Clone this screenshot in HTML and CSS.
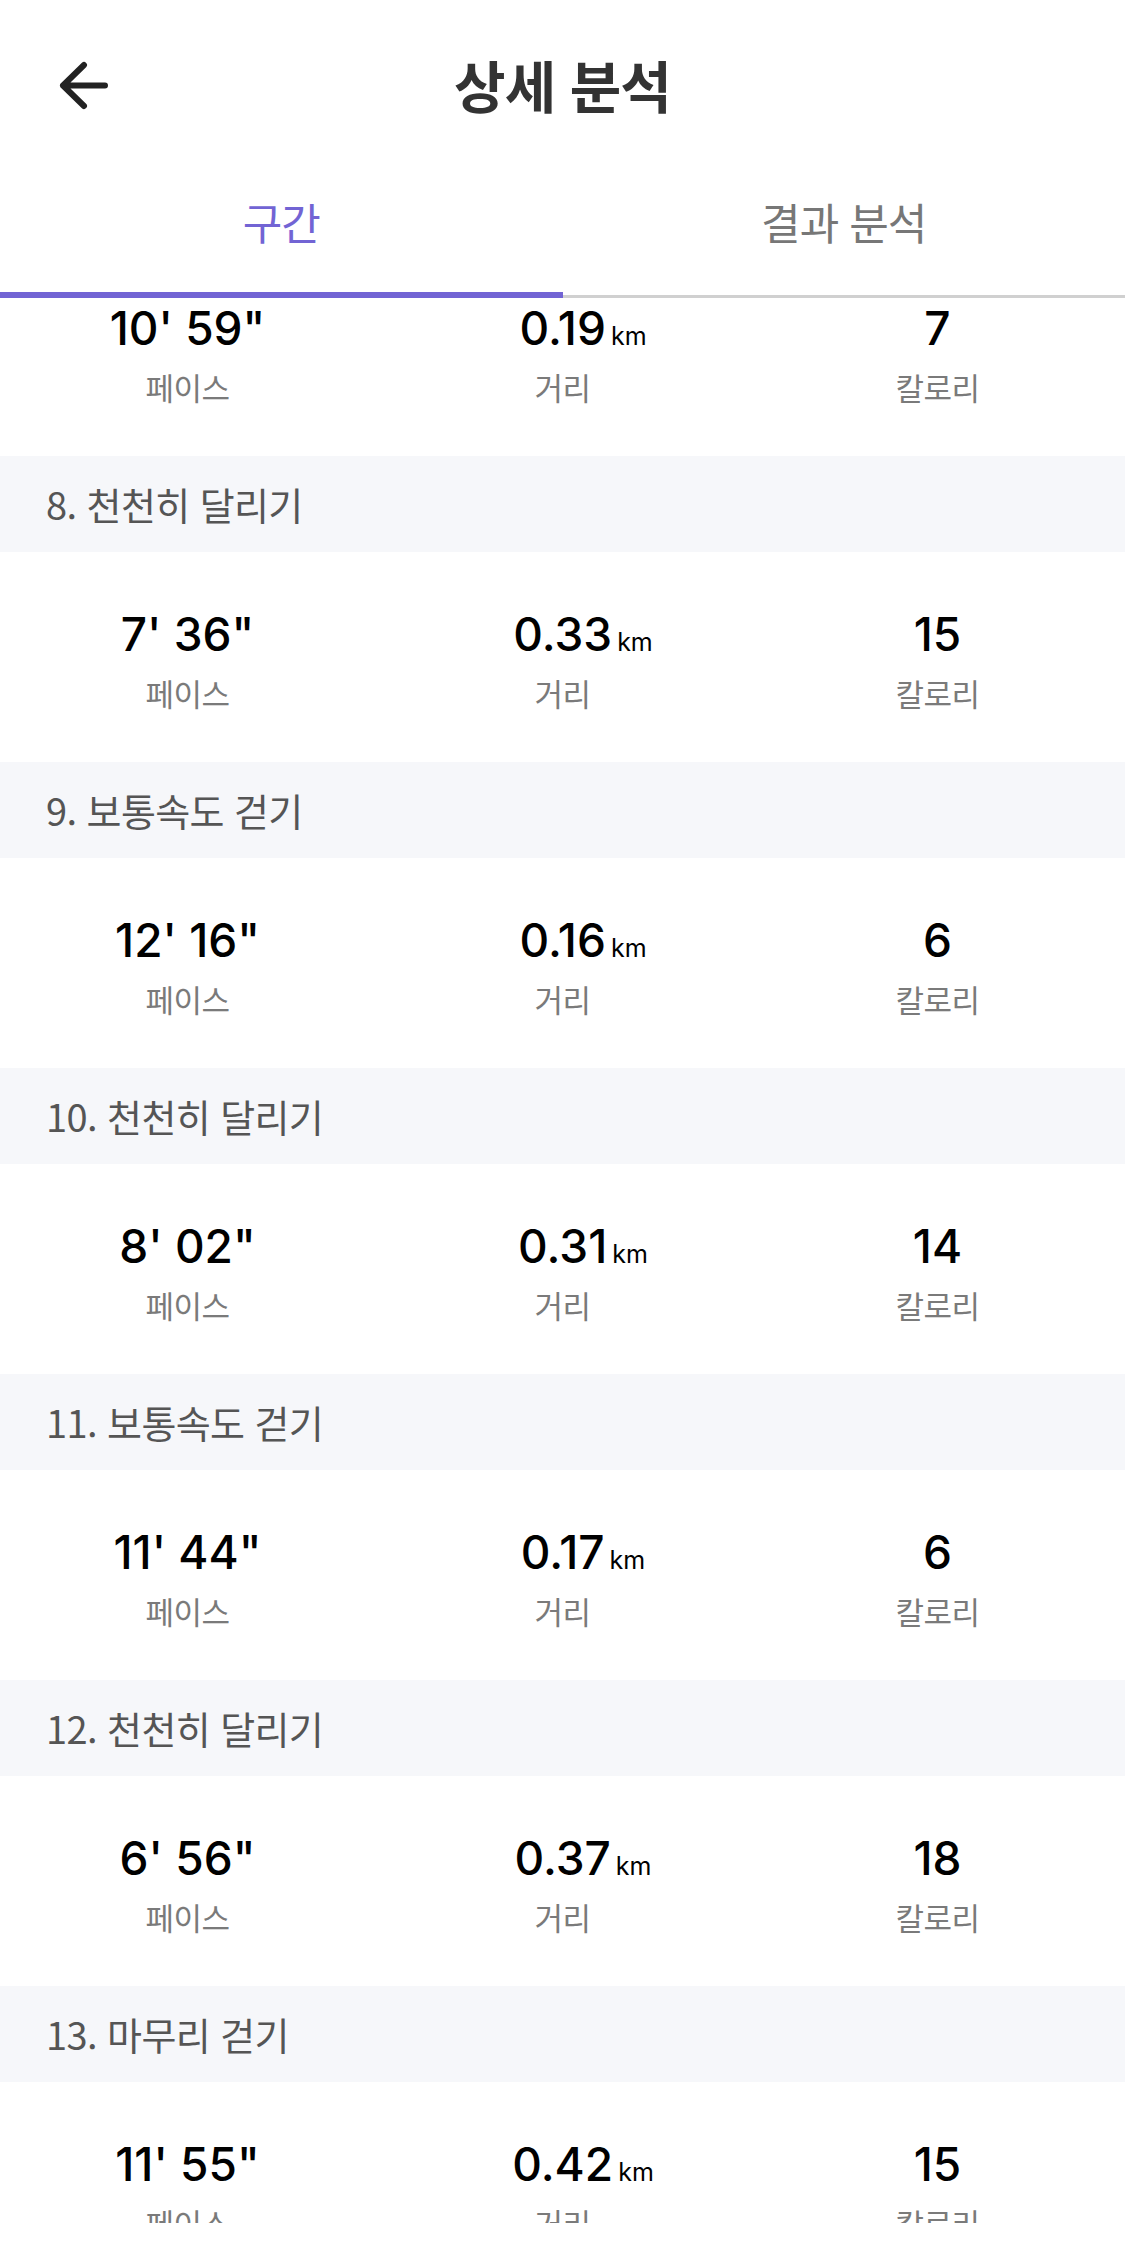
FILE: index.html
```html
<!DOCTYPE html>
<html lang="ko">
<head>
    <meta charset="UTF-8">
    <meta name="viewport" content="width=device-width, initial-scale=1.0">
    <title>상세 분석</title>
    <link rel="stylesheet" href="styles.css">
</head>
<body>

    <div class="app">
        <!-- 상단 바 -->
        <div class="top-bar">
            <div class="back-btn">
                <svg width="52" height="50" viewBox="0 0 52 50">
                    <path d="M26 4 L5 24.5 L26 45 M5 24.5 H47" fill="none" stroke="#222" stroke-width="6" stroke-linecap="round" stroke-linejoin="round"/>
                </svg>
            </div>
            <div class="title">상세 분석</div>
            <div></div>
        </div>

        <!-- 탭 -->
        <div class="tabs">
            <div class="tab active">구간</div>
            <div class="tab">결과 분석</div>
        </div>

        <!-- 구간 목록 (스크롤된 상태) -->
        <div class="list">
            <div class="list-inner">
                <div class="stats">
                    <div class="stat"><div class="value">10' 59"</div><div class="label">페이스</div></div>
                    <div class="stat"><div class="value">0.19<span class="unit">km</span></div><div class="label">거리</div></div>
                    <div class="stat"><div class="value">7</div><div class="label">칼로리</div></div>
                </div>

                <div class="section-title">8. 천천히 달리기</div>
                <div class="stats">
                    <div class="stat"><div class="value">7' 36"</div><div class="label">페이스</div></div>
                    <div class="stat"><div class="value">0.33<span class="unit">km</span></div><div class="label">거리</div></div>
                    <div class="stat"><div class="value">15</div><div class="label">칼로리</div></div>
                </div>

                <div class="section-title">9. 보통속도 걷기</div>
                <div class="stats">
                    <div class="stat"><div class="value">12' 16"</div><div class="label">페이스</div></div>
                    <div class="stat"><div class="value">0.16<span class="unit">km</span></div><div class="label">거리</div></div>
                    <div class="stat"><div class="value">6</div><div class="label">칼로리</div></div>
                </div>

                <div class="section-title">10. 천천히 달리기</div>
                <div class="stats">
                    <div class="stat"><div class="value">8' 02"</div><div class="label">페이스</div></div>
                    <div class="stat"><div class="value">0.31<span class="unit">km</span></div><div class="label">거리</div></div>
                    <div class="stat"><div class="value">14</div><div class="label">칼로리</div></div>
                </div>

                <div class="section-title">11. 보통속도 걷기</div>
                <div class="stats">
                    <div class="stat"><div class="value">11' 44"</div><div class="label">페이스</div></div>
                    <div class="stat"><div class="value">0.17<span class="unit">km</span></div><div class="label">거리</div></div>
                    <div class="stat"><div class="value">6</div><div class="label">칼로리</div></div>
                </div>

                <div class="section-title">12. 천천히 달리기</div>
                <div class="stats">
                    <div class="stat"><div class="value">6' 56"</div><div class="label">페이스</div></div>
                    <div class="stat"><div class="value">0.37<span class="unit">km</span></div><div class="label">거리</div></div>
                    <div class="stat"><div class="value">18</div><div class="label">칼로리</div></div>
                </div>

                <div class="section-title">13. 마무리 걷기</div>
                <div class="stats">
                    <div class="stat"><div class="value">11' 55"</div><div class="label">페이스</div></div>
                    <div class="stat"><div class="value">0.42<span class="unit">km</span></div><div class="label">거리</div></div>
                    <div class="stat"><div class="value">15</div><div class="label">칼로리</div></div>
                </div>
            </div>
        </div>

        <div class="bottom-space"></div>
    </div>

</body>
</html>
```

FILE: styles.css
```css
body {
    margin: 0;
    padding: 0;
    background-color: #fff;
    font-family: "Noto Sans CJK KR", "Noto Sans", sans-serif;
    overflow: hidden;
}

.app {
    width: 1125px;
    height: 2268px;
    display: flex;
    flex-direction: column;
}

.top-bar {
    height: 168px;
    flex-shrink: 0;
    display: grid;
    grid-template-columns: 1fr auto 1fr;
    align-items: center;
}

.back-btn {
    padding-left: 58px;
    padding-top: 4px;
    display: flex;
}

.title {
    font-size: 56px;
    font-weight: 700;
    color: #333;
    letter-spacing: -1px;
    line-height: 1;
}

.tabs {
    display: flex;
    flex-shrink: 0;
}

.tab {
    flex: 1;
    height: 130px;
    box-sizing: border-box;
    padding-top: 32px;
    text-align: center;
    font-size: 43px;
    line-height: 1;
    letter-spacing: -1px;
    color: #777;
    border-bottom: 3px solid #d0d0d0;
}

.tab.active {
    color: #7264d4;
    border-bottom: 6px solid #7264d4;
}

.list {
    flex: 1;
    overflow: hidden;
}

.list-inner {
    margin-top: -52px;
}

.section-title {
    height: 96px;
    display: flex;
    align-items: center;
    padding-left: 46px;
    background-color: #f6f7fa;
    font-size: 38px;
    line-height: 1;
    letter-spacing: -0.6px;
    color: #555;
}

.stats {
    display: grid;
    grid-template-columns: repeat(3, 1fr);
    height: 210px;
    box-sizing: border-box;
    padding-top: 59px;
}

.stat {
    display: flex;
    flex-direction: column;
    align-items: center;
}

.value {
    font-family: Inter, "Noto Sans", sans-serif;
    font-size: 46px;
    font-weight: 500;
    line-height: 1;
    color: #000;
    white-space: nowrap;
}

.unit {
    font-size: 25px;
    margin-left: 5px;
    margin-right: -41px;
    font-weight: 400;
}

.label {
    margin-top: 20px;
    font-size: 31px;
    line-height: 1;
    color: #7a7a7a;
    letter-spacing: -0.6px;
}

.bottom-space {
    height: 45px;
    flex-shrink: 0;
}
```
